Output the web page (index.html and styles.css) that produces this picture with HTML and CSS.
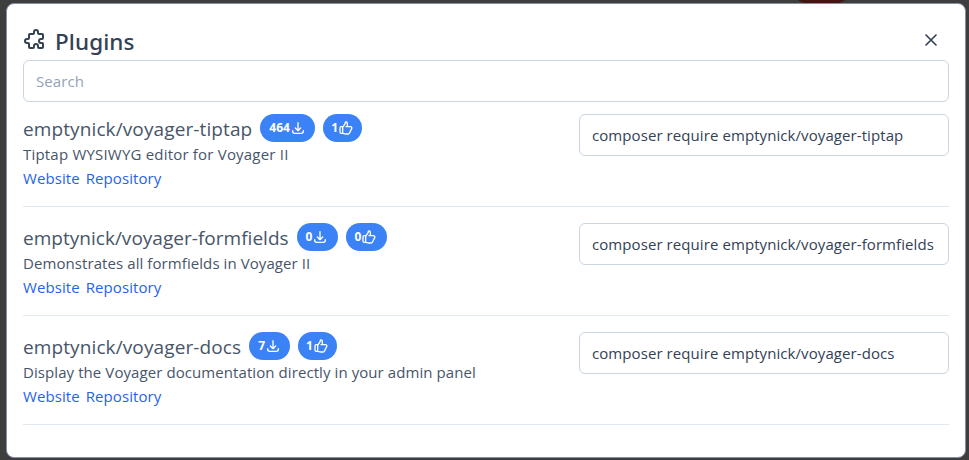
FILE: index.html
```html
<!DOCTYPE html>
<html lang="en">
<head>
<meta charset="utf-8">
<title>Plugins</title>
<link rel="stylesheet" href="styles.css">
</head>
<body>
<svg class="sprite" aria-hidden="true">
  <symbol id="download" viewBox="0 0 24 24"><path d="M4 16v1a3 3 0 003 3h10a3 3 0 003-3v-1m-4-4l-4 4m0 0l-4-4m4 4V4"/></symbol>
  <symbol id="thumb" viewBox="0 0 24 24"><path d="M14 10h4.764a2 2 0 011.789 2.894l-3.5 7A2 2 0 0115.263 21h-4.017c-.163 0-.326-.02-.485-.06L7 20m7-10V5a2 2 0 00-2-2h-.095c-.5 0-.905.405-.905.905 0 .714-.211 1.412-.608 2.006L7 11v9m7-10h-2M7 20H5a2 2 0 01-2-2v-6a2 2 0 012-2h2.5"/></symbol>
</svg>
<div class="backdrop-pill"></div>
<main class="modal">
  <header class="header">
    <svg class="icon puzzle" viewBox="0 0 24 24"><path d="M11 4a2 2 0 114 0v1a1 1 0 001 1h3a1 1 0 011 1v3a1 1 0 01-1 1h-1a2 2 0 100 4h1a1 1 0 011 1v3a1 1 0 01-1 1h-3a1 1 0 01-1-1v-1a2 2 0 10-4 0v1a1 1 0 01-1 1H7a1 1 0 01-1-1v-3a1 1 0 00-1-1H4a2 2 0 110-4h1a1 1 0 001-1V7a1 1 0 011-1h3a1 1 0 001-1V4z"/></svg>
    <h1 class="heading">Plugins</h1>
    <button class="close" aria-label="Close"><svg class="icon" viewBox="0 0 24 24"><path d="M6 18L18 6M6 6l12 12"/></svg></button>
  </header>
  <input class="input search" type="text" placeholder="Search">
  <section class="plugin">
    <div class="info">
      <div class="title"><h2 class="name">emptynick/voyager-tiptap</h2><span class="badge badge-wide">464<svg class="icon"><use href="#download"/></svg></span><span class="badge badge-one">1<svg class="icon"><use href="#thumb"/></svg></span></div>
      <p class="description roomy">Tiptap WYSIWYG editor for Voyager II</p>
      <div class="links"><a href="#">Website</a><a href="#">Repository</a></div>
    </div>
    <input class="input command" type="text" value="composer require emptynick/voyager-tiptap">
  </section>
  <section class="plugin">
    <div class="info">
      <div class="title"><h2 class="name tight">emptynick/voyager-formfields</h2><span class="badge badge-zero">0<svg class="icon"><use href="#download"/></svg></span><span class="badge badge-zero">0<svg class="icon"><use href="#thumb"/></svg></span></div>
      <p class="description">Demonstrates all formfields in Voyager II</p>
      <div class="links"><a href="#">Website</a><a href="#">Repository</a></div>
    </div>
    <input class="input command" type="text" value="composer require emptynick/voyager-formfields">
  </section>
  <section class="plugin">
    <div class="info">
      <div class="title"><h2 class="name">emptynick/voyager-docs</h2><span class="badge">7<svg class="icon"><use href="#download"/></svg></span><span class="badge badge-one">1<svg class="icon"><use href="#thumb"/></svg></span></div>
      <p class="description">Display the Voyager documentation directly in your admin panel</p>
      <div class="links"><a href="#">Website</a><a href="#">Repository</a></div>
    </div>
    <input class="input command" type="text" value="composer require emptynick/voyager-docs">
  </section>
</main>
</body>
</html>
```
FILE: styles.css
```css
* { box-sizing: border-box; }
body {
  margin: 0;
  height: 460px;
  padding: 3px 3px 2px 6px;
  overflow: hidden;
  background: #3e3e3e;
  color: #475569;
  font: 15px/24px "Segoe UI", "Open Sans", "Noto Sans", sans-serif;
  letter-spacing: 0.08px;
}
h1, h2, p { margin: 0; font-weight: 400; }
.sprite { position: absolute; width: 0; height: 0; }
.backdrop-pill {
  position: absolute;
  top: -17px;
  left: 795px;
  width: 53px;
  height: 20px;
  border-radius: 10px;
  background: #451412;
}
.modal {
  position: relative;
  height: 455px;
  padding: 16px;
  border: 1px solid #8491a5;
  border-radius: 8px;
  background: #fff;
}
.icon {
  display: block;
  flex: none;
  fill: none;
  stroke: currentColor;
  stroke-width: 2;
  stroke-linecap: round;
  stroke-linejoin: round;
}
.header { display: flex; height: 40px; color: #334155; }
.puzzle { width: 24px; height: 24px; margin-top: 8px; }
.heading {
  margin-left: 8px;
  font-family: "Segoe UI", "Noto Sans", sans-serif;
  font-size: 22.5px;
  line-height: 44px;
  font-weight: 500;
}
.close {
  width: 20px;
  height: 20px;
  margin: 10px 8px 0 auto;
  padding: 0;
  border: 0;
  background: none;
  color: #334155;
}
.input {
  display: block;
  height: 42px;
  padding: 0 12px;
  border: 1px solid #cbd5e1;
  border-radius: 6px;
  background: #fff;
  color: #334155;
  font: inherit;
  letter-spacing: inherit;
}
.input::placeholder { color: #94a3b8; opacity: 1; }
.search { width: 100%; }
.plugin {
  display: flex;
  justify-content: space-between;
  height: 109px;
  padding-top: 16px;
  border-bottom: 1px solid #e2e8f0;
}
.search + .plugin { height: 105px; padding-top: 12px; }
.title { display: flex; gap: 8px; height: 28px; }
.name { font-size: 19px; line-height: 31px; letter-spacing: 0.11px; white-space: nowrap; }
.name.tight { letter-spacing: 0.02px; }
.roomy { letter-spacing: 0.2px; }
.badge {
  display: flex;
  align-items: center;
  height: 28px;
  padding: 0 9px;
  border-radius: 14px;
  background: #3b82f6;
  color: #fff;
  font-size: 12px;
  font-weight: 700;
  letter-spacing: 0;
}
.badge .icon { width: 16px; height: 16px; }
.badge-wide { width: 55px; }
.badge-zero { width: 41px; }
.badge-one { width: 39px; padding: 0 8px; }
.links { display: flex; gap: 6px; }
.links a { color: #2563eb; text-decoration: none; }
.command { width: 370px; }
```
